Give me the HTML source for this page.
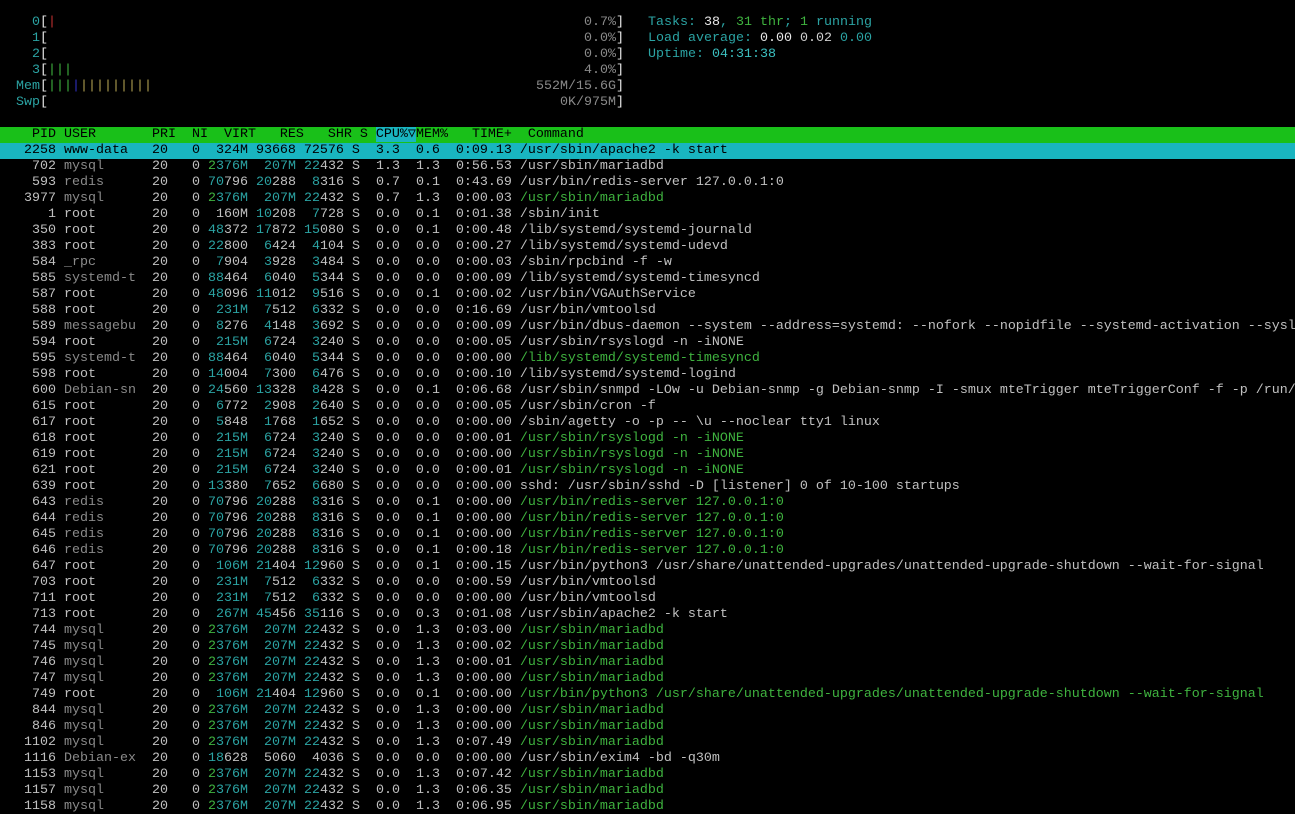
<!DOCTYPE html>
<html><head><meta charset="utf-8"><style>
html,body{margin:0;padding:0;background:#000;width:1295px;height:814px;overflow:hidden}
body{font-family:"Liberation Mono","DejaVu Sans Mono",monospace;font-size:13.33px;line-height:16px;color:#c0c0c0;position:relative}
.l{position:absolute;left:0;white-space:pre;height:16px}
.r{position:absolute;white-space:pre;height:16px;text-align:right}
i{font-style:normal;color:#2ba3a3}
u{text-decoration:none;color:#8a8a8a}
s{text-decoration:none;color:#3fb33f}
.w{color:#e8e8e8}
.gy{color:#8a8a8a}
.tl{color:#2ba3a3}
.gr{color:#3fb33f}
#rows{position:absolute;left:0;top:143px;white-space:normal;width:1295px}
#rows div{height:16px;overflow:hidden;white-space:pre}
.hl{background:#19b5c0;color:#000}
.hd{position:absolute;left:0;top:127px;width:1295px;height:16px;background:#19c019;color:#000;white-space:pre}
</style></head><body>
<div class="l" style="top:15px"><span class="tl">    0</span><span class="w">[</span><span style="color:#c03030">|</span></div>
<div class="l" style="top:31px"><span class="tl">    1</span><span class="w">[</span></div>
<div class="l" style="top:47px"><span class="tl">    2</span><span class="w">[</span></div>
<div class="l" style="top:63px"><span class="tl">    3</span><span class="w">[</span><span class="gr">|||</span></div>
<div class="l" style="top:79px"><span class="tl">  Mem</span><span class="w">[</span><span class="gr">|||</span><span style="color:#3030c0">|</span><span style="color:#b0a050">|||||||||</span></div>
<div class="l" style="top:95px"><span class="tl">  Swp</span><span class="w">[</span></div>
<div class="r" style="top:15px;right:671px"><span class="gy">0.7%</span><span class="w">]</span></div>
<div class="r" style="top:31px;right:671px"><span class="gy">0.0%</span><span class="w">]</span></div>
<div class="r" style="top:47px;right:671px"><span class="gy">0.0%</span><span class="w">]</span></div>
<div class="r" style="top:63px;right:671px"><span class="gy">4.0%</span><span class="w">]</span></div>
<div class="r" style="top:79px;right:671px"><span class="gy">552M/15.6G</span><span class="w">]</span></div>
<div class="r" style="top:95px;right:671px"><span class="gy">0K/975M</span><span class="w">]</span></div>
<div class="l" style="top:15px;left:648px"><span class="tl">Tasks: </span><span class="w">38</span><span class="tl">, </span><span class="gr">31 thr</span><span class="tl">; </span><span class="gr">1</span><span class="tl"> running</span></div>
<div class="l" style="top:31px;left:648px"><span class="tl">Load average: </span><span class="w">0.00 </span><span style="color:#d0d0d0">0.02 </span><span class="tl">0.00</span></div>
<div class="l" style="top:47px;left:648px"><span class="tl">Uptime: </span><span style="color:#3cc0c0">04:31:38</span></div>
<div class="hd">    PID USER       PRI  NI  VIRT   RES   SHR S <span style="background:#19b5c0">CPU%▽</span>MEM%   TIME+  Command</div>
<div id="rows">
<div class="hl">   2258 www-data   20   0  324M 93668 72576 S  3.3  0.6  0:09.13 /usr/sbin/apache2 -k start</div>
<div>    702 <u>mysql    </u>  20   0 <s>2</s><i>376M</i>  <i>207M</i> <i>22</i>432 S  1.3  1.3  0:56.53 /usr/sbin/mariadbd</div>
<div>    593 <u>redis    </u>  20   0 <i>70</i>796 <i>20</i>288  <i>8</i>316 S  0.7  0.1  0:43.69 /usr/bin/redis-server 127.0.0.1:0</div>
<div>   3977 <u>mysql    </u>  20   0 <s>2</s><i>376M</i>  <i>207M</i> <i>22</i>432 S  0.7  1.3  0:00.03 <s>/usr/sbin/mariadbd</s></div>
<div>      1 root       20   0  160M <i>10</i>208  <i>7</i>728 S  0.0  0.1  0:01.38 /sbin/init</div>
<div>    350 root       20   0 <i>48</i>372 <i>17</i>872 <i>15</i>080 S  0.0  0.1  0:00.48 /lib/systemd/systemd-journald</div>
<div>    383 root       20   0 <i>22</i>800  <i>6</i>424  <i>4</i>104 S  0.0  0.0  0:00.27 /lib/systemd/systemd-udevd</div>
<div>    584 <u>_rpc     </u>  20   0  <i>7</i>904  <i>3</i>928  <i>3</i>484 S  0.0  0.0  0:00.03 /sbin/rpcbind -f -w</div>
<div>    585 <u>systemd-t</u>  20   0 <i>88</i>464  <i>6</i>040  <i>5</i>344 S  0.0  0.0  0:00.09 /lib/systemd/systemd-timesyncd</div>
<div>    587 root       20   0 <i>48</i>096 <i>11</i>012  <i>9</i>516 S  0.0  0.1  0:00.02 /usr/bin/VGAuthService</div>
<div>    588 root       20   0  <i>231M</i>  <i>7</i>512  <i>6</i>332 S  0.0  0.0  0:16.69 /usr/bin/vmtoolsd</div>
<div>    589 <u>messagebu</u>  20   0  <i>8</i>276  <i>4</i>148  <i>3</i>692 S  0.0  0.0  0:00.09 /usr/bin/dbus-daemon --system --address=systemd: --nofork --nopidfile --systemd-activation --syslog-only</div>
<div>    594 root       20   0  <i>215M</i>  <i>6</i>724  <i>3</i>240 S  0.0  0.0  0:00.05 /usr/sbin/rsyslogd -n -iNONE</div>
<div>    595 <u>systemd-t</u>  20   0 <i>88</i>464  <i>6</i>040  <i>5</i>344 S  0.0  0.0  0:00.00 <s>/lib/systemd/systemd-timesyncd</s></div>
<div>    598 root       20   0 <i>14</i>004  <i>7</i>300  <i>6</i>476 S  0.0  0.0  0:00.10 /lib/systemd/systemd-logind</div>
<div>    600 <u>Debian-sn</u>  20   0 <i>24</i>560 <i>13</i>328  <i>8</i>428 S  0.0  0.1  0:06.68 /usr/sbin/snmpd -LOw -u Debian-snmp -g Debian-snmp -I -smux mteTrigger mteTriggerConf -f -p /run/snmpd.pid</div>
<div>    615 root       20   0  <i>6</i>772  <i>2</i>908  <i>2</i>640 S  0.0  0.0  0:00.05 /usr/sbin/cron -f</div>
<div>    617 root       20   0  <i>5</i>848  <i>1</i>768  <i>1</i>652 S  0.0  0.0  0:00.00 /sbin/agetty -o -p -- \u --noclear tty1 linux</div>
<div>    618 root       20   0  <i>215M</i>  <i>6</i>724  <i>3</i>240 S  0.0  0.0  0:00.01 <s>/usr/sbin/rsyslogd -n -iNONE</s></div>
<div>    619 root       20   0  <i>215M</i>  <i>6</i>724  <i>3</i>240 S  0.0  0.0  0:00.00 <s>/usr/sbin/rsyslogd -n -iNONE</s></div>
<div>    621 root       20   0  <i>215M</i>  <i>6</i>724  <i>3</i>240 S  0.0  0.0  0:00.01 <s>/usr/sbin/rsyslogd -n -iNONE</s></div>
<div>    639 root       20   0 <i>13</i>380  <i>7</i>652  <i>6</i>680 S  0.0  0.0  0:00.00 sshd: /usr/sbin/sshd -D [listener] 0 of 10-100 startups</div>
<div>    643 <u>redis    </u>  20   0 <i>70</i>796 <i>20</i>288  <i>8</i>316 S  0.0  0.1  0:00.00 <s>/usr/bin/redis-server 127.0.0.1:0</s></div>
<div>    644 <u>redis    </u>  20   0 <i>70</i>796 <i>20</i>288  <i>8</i>316 S  0.0  0.1  0:00.00 <s>/usr/bin/redis-server 127.0.0.1:0</s></div>
<div>    645 <u>redis    </u>  20   0 <i>70</i>796 <i>20</i>288  <i>8</i>316 S  0.0  0.1  0:00.00 <s>/usr/bin/redis-server 127.0.0.1:0</s></div>
<div>    646 <u>redis    </u>  20   0 <i>70</i>796 <i>20</i>288  <i>8</i>316 S  0.0  0.1  0:00.18 <s>/usr/bin/redis-server 127.0.0.1:0</s></div>
<div>    647 root       20   0  <i>106M</i> <i>21</i>404 <i>12</i>960 S  0.0  0.1  0:00.15 /usr/bin/python3 /usr/share/unattended-upgrades/unattended-upgrade-shutdown --wait-for-signal</div>
<div>    703 root       20   0  <i>231M</i>  <i>7</i>512  <i>6</i>332 S  0.0  0.0  0:00.59 /usr/bin/vmtoolsd</div>
<div>    711 root       20   0  <i>231M</i>  <i>7</i>512  <i>6</i>332 S  0.0  0.0  0:00.00 /usr/bin/vmtoolsd</div>
<div>    713 root       20   0  <i>267M</i> <i>45</i>456 <i>35</i>116 S  0.0  0.3  0:01.08 /usr/sbin/apache2 -k start</div>
<div>    744 <u>mysql    </u>  20   0 <s>2</s><i>376M</i>  <i>207M</i> <i>22</i>432 S  0.0  1.3  0:03.00 <s>/usr/sbin/mariadbd</s></div>
<div>    745 <u>mysql    </u>  20   0 <s>2</s><i>376M</i>  <i>207M</i> <i>22</i>432 S  0.0  1.3  0:00.02 <s>/usr/sbin/mariadbd</s></div>
<div>    746 <u>mysql    </u>  20   0 <s>2</s><i>376M</i>  <i>207M</i> <i>22</i>432 S  0.0  1.3  0:00.01 <s>/usr/sbin/mariadbd</s></div>
<div>    747 <u>mysql    </u>  20   0 <s>2</s><i>376M</i>  <i>207M</i> <i>22</i>432 S  0.0  1.3  0:00.00 <s>/usr/sbin/mariadbd</s></div>
<div>    749 root       20   0  <i>106M</i> <i>21</i>404 <i>12</i>960 S  0.0  0.1  0:00.00 <s>/usr/bin/python3 /usr/share/unattended-upgrades/unattended-upgrade-shutdown --wait-for-signal</s></div>
<div>    844 <u>mysql    </u>  20   0 <s>2</s><i>376M</i>  <i>207M</i> <i>22</i>432 S  0.0  1.3  0:00.00 <s>/usr/sbin/mariadbd</s></div>
<div>    846 <u>mysql    </u>  20   0 <s>2</s><i>376M</i>  <i>207M</i> <i>22</i>432 S  0.0  1.3  0:00.00 <s>/usr/sbin/mariadbd</s></div>
<div>   1102 <u>mysql    </u>  20   0 <s>2</s><i>376M</i>  <i>207M</i> <i>22</i>432 S  0.0  1.3  0:07.49 <s>/usr/sbin/mariadbd</s></div>
<div>   1116 <u>Debian-ex</u>  20   0 <i>18</i>628  5060  4036 S  0.0  0.0  0:00.00 /usr/sbin/exim4 -bd -q30m</div>
<div>   1153 <u>mysql    </u>  20   0 <s>2</s><i>376M</i>  <i>207M</i> <i>22</i>432 S  0.0  1.3  0:07.42 <s>/usr/sbin/mariadbd</s></div>
<div>   1157 <u>mysql    </u>  20   0 <s>2</s><i>376M</i>  <i>207M</i> <i>22</i>432 S  0.0  1.3  0:06.35 <s>/usr/sbin/mariadbd</s></div>
<div>   1158 <u>mysql    </u>  20   0 <s>2</s><i>376M</i>  <i>207M</i> <i>22</i>432 S  0.0  1.3  0:06.95 <s>/usr/sbin/mariadbd</s></div>
</div>
</body></html>
